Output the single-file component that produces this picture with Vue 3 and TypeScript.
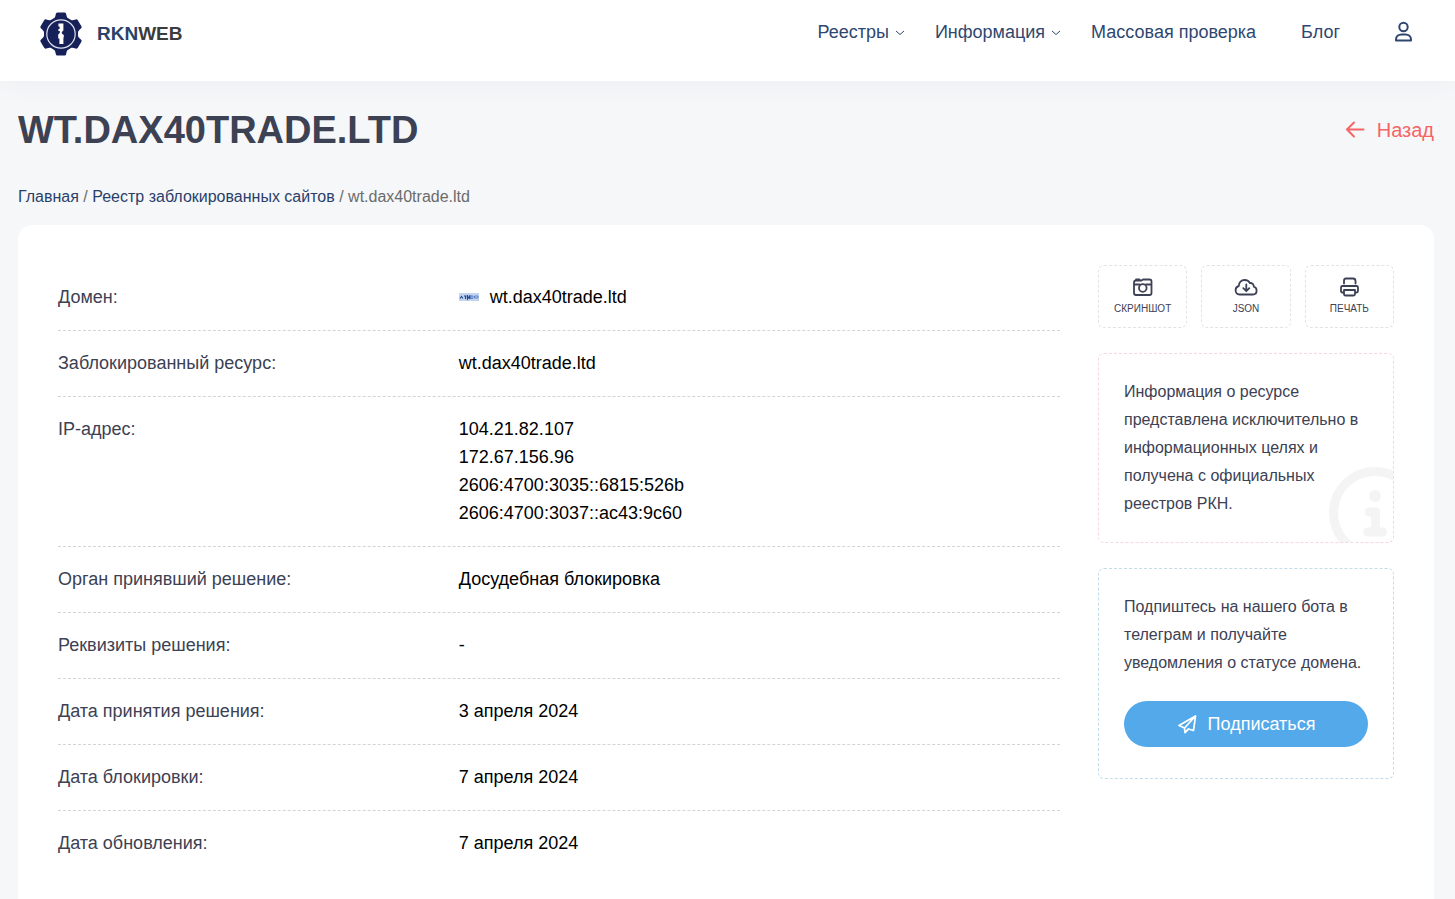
<script setup lang="ts">
interface NavItem {
  label: string
  menu: boolean
}

interface Row {
  label: string
  values: string[]
  favicon?: boolean
}

const nav: NavItem[] = [
  { label: 'Реестры', menu: true },
  { label: 'Информация', menu: true },
  { label: 'Массовая проверка', menu: false },
  { label: 'Блог', menu: false },
]

const rows: Row[] = [
  { label: 'Домен:', values: ['wt.dax40trade.ltd'], favicon: true },
  { label: 'Заблокированный ресурс:', values: ['wt.dax40trade.ltd'] },
  {
    label: 'IP-адрес:',
    values: ['104.21.82.107', '172.67.156.96', '2606:4700:3035::6815:526b', '2606:4700:3037::ac43:9c60'],
  },
  { label: 'Орган принявший решение:', values: ['Досудебная блокировка'] },
  { label: 'Реквизиты решения:', values: ['-'] },
  { label: 'Дата принятия решения:', values: ['3 апреля 2024'] },
  { label: 'Дата блокировки:', values: ['7 апреля 2024'] },
  { label: 'Дата обновления:', values: ['7 апреля 2024'] },
]

const teeth = [0, 60, 120, 180, 240, 300]
</script>

<template>
  <div class="page">
    <header class="header">
      <a class="logo" href="#">
        <svg class="gear" viewBox="0 0 44 44" aria-hidden="true">
          <circle cx="22" cy="22" r="17" fill="#16215a" />
          <path
            v-for="angle in teeth"
            :key="angle"
            d="M12 8 C15.5 7.2 16.4 5 16.8 2 Q17 0.5 18.4 0.5 H25.6 Q27 0.5 27.2 2 C27.6 5 28.5 7.2 32 8 L28 16 H16 Z"
            fill="#16215a"
            :transform="`rotate(${angle} 22 22)`"
          />
          <circle cx="22" cy="22" r="14.2" fill="none" stroke="#dfe3f0" stroke-width="1.2" />
          <path
            d="M19.4 11.5 H24.4 V18.5 L22.8 20 V21.5 L24.8 23 V25.5 H24.4 V32 H20.4 V26.5 H19.2 V22.5 L20.8 21 V19 H19.4 V17 H20.6 V14.5 H19.4 Z"
            fill="#fff"
          />
        </svg>
        <span class="brand"><span class="brand-first">RKN</span>WEB</span>
      </a>
      <nav class="nav">
        <a v-for="item in nav" :key="item.label" class="nav-link" :class="{ 'has-menu': item.menu }" href="#">
          {{ item.label }}
          <svg v-if="item.menu" class="chevron" viewBox="0 0 10 10" aria-hidden="true">
            <path d="M1 4 L5 7.5 L9 4" />
          </svg>
        </a>
        <a class="user" href="#" aria-label="Личный кабинет">
          <svg viewBox="0 0 20 22" aria-hidden="true">
            <circle cx="9.5" cy="6" r="4.2" />
            <path d="M2 19.5 V18.5 C2 15.5 4.5 13.5 7.5 13.5 H11.5 C14.5 13.5 17 15.5 17 18.5 V19.5 Z" />
          </svg>
        </a>
      </nav>
    </header>

    <main class="main">
      <div class="title-row">
        <h1>WT.DAX40TRADE.LTD</h1>
        <a class="back" href="#">
          <svg viewBox="0 0 20 18" aria-hidden="true">
            <path d="M18.5 8.5 H2 M9 1.5 L2 8.5 L9 15.5" />
          </svg>
          Назад
        </a>
      </div>

      <div class="crumbs">
        <a href="#">Главная</a> / <a href="#">Реестр заблокированных сайтов</a> / <span>wt.dax40trade.ltd</span>
      </div>

      <section class="card">
        <dl class="info">
          <div v-for="row in rows" :key="row.label" class="row">
            <dt>{{ row.label }}</dt>
            <dd>
              <div v-for="value in row.values" :key="value" class="value">
                <svg v-if="row.favicon" class="favicon" viewBox="0 0 20 8" aria-hidden="true">
                  <rect width="20" height="8" fill="#c3d4ee" />
                  <path
                    d="M1 5.5 L3 3 M2 3 L4 5.5 M5 3 H7.5 M6.5 3 V6 M8.5 2 V6 L10 4 L11 6 V2"
                    fill="none"
                    stroke="#1d4a9c"
                    stroke-width="1.2"
                  />
                  <path d="M12 3 H14 V5.5 H12 Z M15.5 3 H19 V5 H15.5 Z" fill="none" stroke="#5d83c2" />
                </svg>
                {{ value }}
              </div>
            </dd>
          </div>
        </dl>

        <aside class="side">
          <div class="actions">
            <button type="button" class="action">
              <svg viewBox="0 0 24 24" aria-hidden="true">
                <path d="M3 7.5 Q3 5.5 5 5.5 H10.5 L12 4.5 H18.5 Q20.5 4.5 20.5 6.5 V18 Q20.5 20 18.5 20 H5 Q3 20 3 18 Z M5 5.2 V4.5 H8.5 M3 9.5 H8.5 M15 9.5 H20.5" />
                <circle cx="11.8" cy="13" r="3.8" />
              </svg>
              Скриншот
            </button>
            <button type="button" class="action">
              <svg viewBox="0 0 24 24" aria-hidden="true">
                <path d="M5.5 19.5 C3.2 19.5 1.6 17.8 1.6 15.3 C1.6 13 3 11.4 4.8 11 C4.8 7.4 7.3 5 10.6 5 C13.2 5 15 6.2 15.8 8 C18.4 7.8 19.8 9.6 19.8 11.7 C21.6 12.2 22.6 13.6 22.6 15.5 C22.6 17.9 21 19.5 19 19.5 Z M12.3 9.5 V16 M9.3 13.2 L12.3 16.2 L15.3 13.2" />
              </svg>
              JSON
            </button>
            <button type="button" class="action">
              <svg viewBox="0 0 24 24" aria-hidden="true">
                <path d="M7 8.5 V5.5 Q7 3.5 9 3.5 H16 Q18.5 3.5 18.5 6 V8.5 M6.5 17.5 H5.5 Q4 17.5 4 16 V12.5 Q4 11 5.5 11 H19.5 Q21 11 21 12.5 V16 Q21 17.5 19.5 17.5 H18.5 M7 15 H18 V19 Q18 20.5 16.5 20.5 H8.5 Q7 20.5 7 19 Z" />
              </svg>
              Печать
            </button>
          </div>

          <div class="note">
            <p>Информация о ресурсе представлена исключительно в информационных целях и получена с официальных реестров РКН.</p>
            <svg class="note-mark" viewBox="0 0 92 92" aria-hidden="true">
              <circle cx="46" cy="46" r="41.5" fill="none" stroke="#f4f4f4" stroke-width="9" />
              <circle cx="46" cy="29" r="6" fill="#f4f4f4" />
              <path
                d="M40 45 H46.5 V65 M38.5 65 H53.5"
                fill="none"
                stroke="#f4f4f4"
                stroke-width="9"
                stroke-linecap="round"
                stroke-linejoin="round"
              />
            </svg>
          </div>

          <div class="bot">
            <p>Подпиштесь на нашего бота в телеграм и получайте уведомления о статусе домена.</p>
            <a class="subscribe" href="#">
              <svg viewBox="0 0 20 20" aria-hidden="true">
                <path d="M2 11.5 L18.5 2 L16.5 16.5 L11.5 15 L8 18.5 L7.5 14 Z M7.5 14 L18.5 2" />
              </svg>
              Подписаться
            </a>
          </div>
        </aside>
      </section>
    </main>
  </div>
</template>

<style>
body {
  margin: 0;
  background: #f6f7f9;
}
html {
  overflow: hidden;
}
</style>

<style scoped>
.page {
  min-height: 100vh;
  font-family: "Liberation Sans", Arial, sans-serif;
  color: #3c4153;
}
svg {
  flex: none;
}
a {
  text-decoration: none;
}
.header {
  display: flex;
  justify-content: space-between;
  box-sizing: border-box;
  height: 81px;
  padding: 12px 41px 0 39px;
  background: #fff;
  box-shadow: 0 0 30px rgba(60, 65, 83, 0.06);
}
.logo {
  display: flex;
  align-items: center;
  gap: 14px;
  height: 44px;
}
.gear {
  width: 44px;
  height: 44px;
}
.brand {
  font-size: 19px;
  font-weight: 700;
  color: #3c3c3c;
}
.brand-first {
  color: #2a4268;
}
.nav {
  display: flex;
  align-items: center;
  height: 40px;
  font-size: 18px;
}
.nav-link {
  display: flex;
  align-items: center;
  gap: 6px;
  margin-right: 45px;
  color: #2f4770;
}
.nav-link.has-menu {
  margin-right: 30px;
}
.chevron {
  width: 10px;
  height: 10px;
  fill: none;
  stroke: #2f4770;
}
.user {
  display: flex;
  margin-left: 9px;
}
.user svg {
  width: 20px;
  height: 22px;
  fill: none;
  stroke: #2f4770;
  stroke-width: 2;
  stroke-linejoin: round;
}
.main {
  padding: 26px 21px 0 18px;
}
.title-row {
  display: flex;
  align-items: center;
  justify-content: space-between;
}
h1 {
  margin: 0;
  font-size: 38px;
  line-height: 46px;
}
.back {
  display: flex;
  align-items: center;
  gap: 12px;
  font-size: 20px;
  color: #f56565;
}
.back svg {
  width: 20px;
  height: 18px;
  fill: none;
  stroke: #f56565;
  stroke-width: 2;
  stroke-linecap: round;
  stroke-linejoin: round;
}
.crumbs {
  margin-top: 32px;
  font-size: 16px;
  line-height: 24px;
  color: #6b6b6b;
}
.crumbs a {
  color: #2a3f6b;
}
.card {
  display: flex;
  gap: 38px;
  margin-top: 16px;
  padding: 40px;
  background: #fff;
  border-radius: 14px;
}
.info {
  flex: 1;
  margin: 0;
  font-size: 18px;
  line-height: 28px;
}
.row {
  display: flex;
  padding: 18px 0 19px;
  border-bottom: 1px dashed #d2d4d9;
}
.row:last-child {
  border-bottom: 0;
}
dt {
  width: 40%;
}
dd {
  margin: 0;
  color: #000;
}
.value {
  display: flex;
  align-items: center;
  gap: 11px;
}
.favicon {
  width: 20px;
  height: 8px;
}
.side {
  width: 296px;
}
.actions {
  display: grid;
  grid-template-columns: repeat(3, 1fr);
  gap: 14px;
}
.action {
  display: flex;
  flex-direction: column;
  align-items: center;
  gap: 4px;
  height: 63px;
  padding: 9px 0 0;
  border: 1px dashed #e2e3e6;
  border-radius: 6px;
  background: #fff;
  font-family: inherit;
  font-size: 10px;
  line-height: 12px;
  text-transform: uppercase;
  color: #3c4153;
}
.action svg {
  width: 24px;
  height: 24px;
  fill: none;
  stroke: #3c4153;
  stroke-width: 1.8;
  stroke-linecap: round;
  stroke-linejoin: round;
}
.note,
.bot {
  margin-top: 25px;
  border: 1px dashed #f8d7da;
  border-radius: 6px;
  font-size: 16px;
  line-height: 28px;
}
.note {
  position: relative;
  overflow: hidden;
  padding: 24px 25px;
}
.note p,
.bot p {
  position: relative;
  z-index: 1;
  margin: 0;
}
.note-mark {
  position: absolute;
  right: -28px;
  bottom: -17px;
  width: 92px;
  height: 92px;
}
.bot {
  padding: 24px 25px 31px;
  border-color: #c3dcec;
}
.subscribe {
  display: flex;
  align-items: center;
  justify-content: center;
  gap: 11px;
  height: 46px;
  margin-top: 24px;
  border-radius: 23px;
  background: #54a9eb;
  font-size: 18px;
  color: #fff;
}
.subscribe svg {
  width: 20px;
  height: 20px;
  fill: none;
  stroke: #fff;
  stroke-width: 1.8;
  stroke-linejoin: round;
}
</style>
